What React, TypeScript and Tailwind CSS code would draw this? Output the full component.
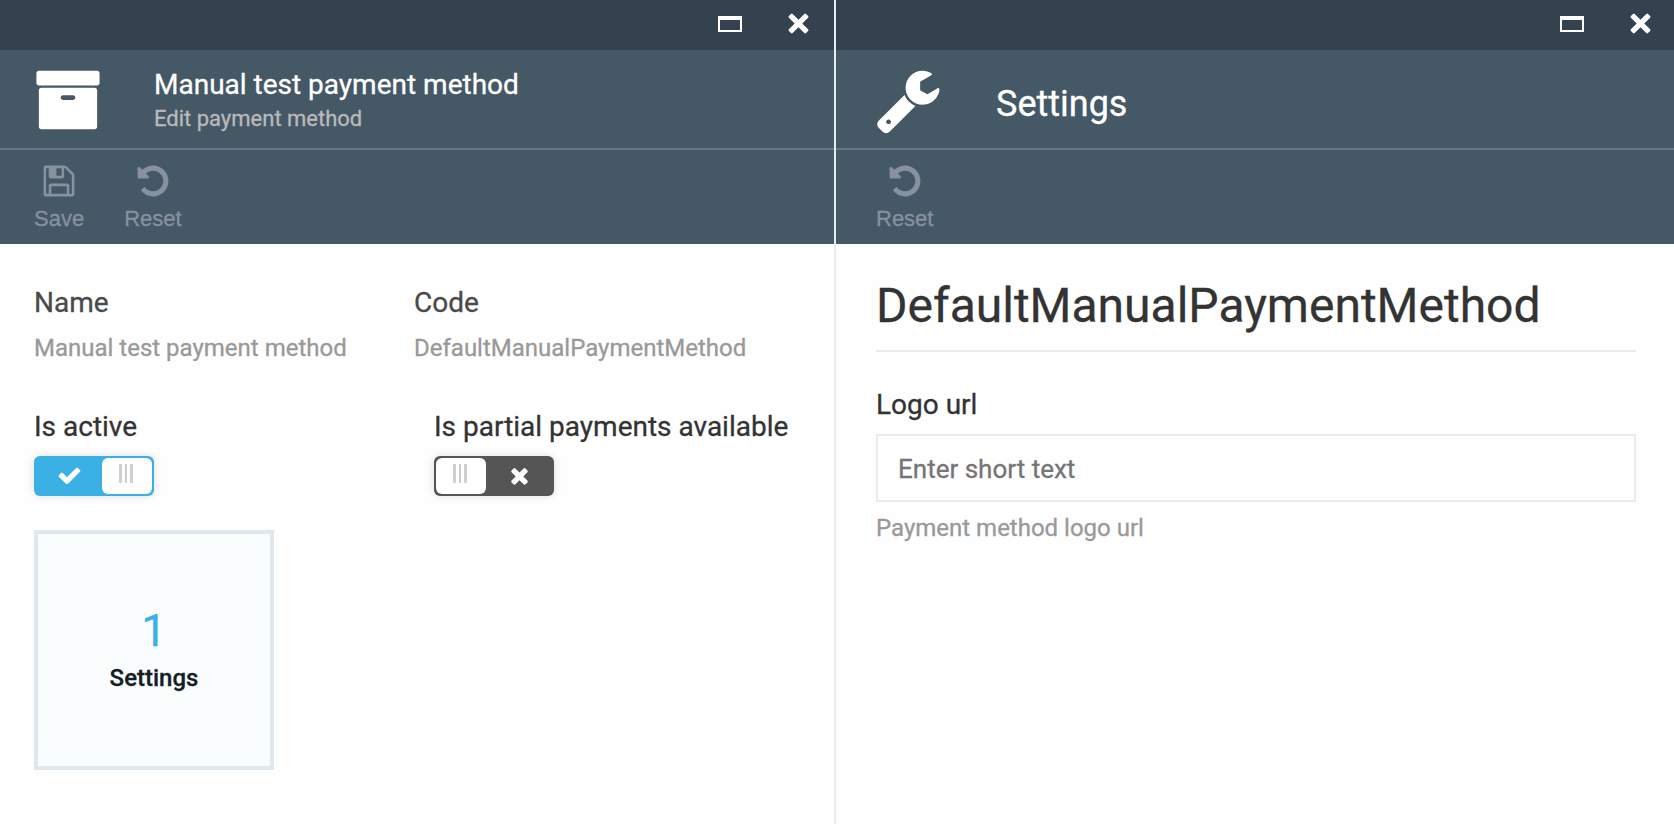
import React from 'react';

const ICONS = {
  archive:
    'M1088 832q0-26-19-45t-45-19h-256q-26 0-45 19t-19 45 19 45 45 19h256q26 0 45-19t19-45zm576-192v960q0 26-19 45t-45 19h-1408q-26 0-45-19t-19-45v-960q0-26 19-45t45-19h1408q26 0 45 19t19 45zm64-448v256q0 26-19 45t-45 19h-1536q-26 0-45-19t-19-45v-256q0-26 19-45t45-19h1536q26 0 45 19t19 45z',
  wrench:
    'M448 1472q0-26-19-45t-45-19-45 19-19 45 19 45 45 19 45-19 19-45zm644-420l-682 682q-37 37-90 37-52 0-91-37l-106-108q-38-36-38-90 0-53 38-91l681-681q39 98 114.5 173.5t173.5 114.5zm634-435q0 39-23 106-47 134-164.5 217.5t-258.5 83.5q-185 0-316.5-131.5t-131.5-316.5 131.5-316.5 316.5-131.5q58 0 121.5 16.5t107.5 46.5q16 11 16 28t-16 28l-293 169v224l193 107q5-3 79-48.5t135.5-81 70.5-35.5q15 0 23.5 10t8.5 25z',
  undo:
    'M1664 896q0 156-61 298t-164 245-245 164-298 61q-172 0-327-72.5t-264-204.5q-7-10-6.5-22.5t8.5-20.5l137-138q10-9 25-9 16 2 23 12 73 95 179 147t225 52q104 0 198.5-40.5t163.5-109.5 109.5-163.5 40.5-198.5-40.5-198.5-109.5-163.5-163.5-109.5-198.5-40.5q-98 0-188 35.5t-160 101.5l137 138q31 30 14 69-17 40-59 40h-448q-26 0-45-19t-19-45v-448q0-42 40-59 39-17 69 14l130 129q107-101 244.5-156.5t284.5-55.5q156 0 298 61t245 164 164 245 61 298z',
  save:
    'M512 1536h768v-384h-768v384zm896 0h128v-896q0-14-10-38.5t-20-34.5l-281-281q-10-10-34-20t-39-10v416q0 40-28 68t-68 28h-576q-40 0-68-28t-28-68v-416h-128v1280h128v-416q0-40 28-68t68-28h832q40 0 68 28t28 68v416zm-384-928v-320q0-13-9.5-22.5t-22.5-9.5h-192q-13 0-22.5 9.5t-9.5 22.5v320q0 13 9.5 22.5t22.5 9.5h192q13 0 22.5-9.5t9.5-22.5zm640 32v928q0 40-28 68t-68 28h-1344q-40 0-68-28t-28-68v-1344q0-40 28-68t68-28h928q40 0 88 20t76 48l280 280q28 28 48 76t20 88z',
  check:
    'M1671 566q0 40-28 68l-724 724-136 136q-28 28-68 28t-68-28l-136-136-362-362q-28-28-28-68t28-68l136-136q28-28 68-28t68 28l294 295 656-657q28-28 68-28t68 28l136 136q28 28 28 68z',
  times:
    'M1490 1322q0 40-28 68l-136 136q-28 28-68 28t-68-28l-294-294-294 294q-28 28-68 28t-68-28l-136-136q-28-28-28-68t28-68l294-294-294-294q-28-28-28-68t28-68l136-136q28-28 68-28t68 28l294 294 294-294q28-28 68-28t68 28l136 136q28 28 28 68t-28 68l-294 294 294 294q28 28 28 68z',
};

function Icon({ name, className }: { name: keyof typeof ICONS; className: string }) {
  return (
    <svg viewBox="0 0 1792 1792" fill="currentColor" className={`block shrink-0 ${className}`}>
      <path d={ICONS[name]} />
    </svg>
  );
}

function TitleBar({ className }: { className: string }) {
  return (
    <div className={`flex h-[50px] items-start justify-end bg-[#34414e] text-white ${className}`}>
      <div className="mt-4 h-4 w-6 border-2 border-t-4 border-white" />
      <svg viewBox="0 0 22 22" fill="currentColor" className="ml-[46px] mt-[13px] block size-[22px]">
        <rect x="-1.6" y="7.8" width="24.2" height="5.4" rx="1.2" transform="rotate(45 10.5 10.5)" />
        <rect x="-1.6" y="7.8" width="24.2" height="5.4" rx="1.2" transform="rotate(-45 10.5 10.5)" />
      </svg>
    </div>
  );
}

function Tool({ icon, label }: { icon: keyof typeof ICONS; label: string }) {
  return (
    <div className="flex flex-col items-center">
      <Icon name={icon} className="size-9" />
      <span className="mt-[7px] font-['Liberation_Sans',sans-serif] text-[22px] leading-[26px]">{label}</span>
    </div>
  );
}

function Grip() {
  return (
    <div className="flex h-9 w-[50px] justify-center gap-[3px] rounded-md bg-white pr-[2px] pt-[6px]">
      <span className="h-[19px] w-[3px] bg-[#d0d0d0]" />
      <span className="h-[19px] w-[2px] bg-[#cccccc]" />
      <span className="h-[19px] w-[3px] bg-[#d0d0d0]" />
    </div>
  );
}

function Toggle({ on }: { on: boolean }) {
  return on ? (
    <div className="flex h-10 w-[120px] items-center justify-between rounded-md bg-[#3ab0e4] p-0.5 text-white shadow-[0_0_8px_rgba(0,0,0,0.12)]">
      <span className="flex flex-1 justify-center pb-[2px]">
        <Icon name="check" className="size-[25px]" />
      </span>
      <Grip />
    </div>
  ) : (
    <div className="flex h-10 w-[120px] items-center justify-between rounded-md bg-[#555555] p-0.5 text-white shadow-[0_0_8px_rgba(0,0,0,0.12)]">
      <Grip />
      <span className="flex flex-1 justify-center pb-[2px]">
        <Icon name="times" className="size-[25px]" />
      </span>
    </div>
  );
}

export default function App() {
  return (
    <div className="flex h-[824px] w-[1674px] overflow-hidden bg-[#fefefe] font-['Roboto',sans-serif] text-[#333333] [-webkit-text-stroke:0.3px]">
      <section className="flex w-[836px] shrink-0 flex-col border-r-2 border-[#e8edf3]">
        <TitleBar className="pr-6" />
        <header className="flex h-[100px] border-b-2 border-[#687886] bg-[#455866] pl-[34px] text-white">
          <Icon name="archive" className="mt-4 size-[68px]" />
          <div className="ml-[52px] pt-[19px]">
            <h1 className="text-[28px] leading-8">Manual test payment method</h1>
            <p className="mt-[5px] text-[22px] leading-[26px] text-[#bababa]">Edit payment method</p>
          </div>
        </header>
        <nav className="flex h-[94px] gap-10 bg-[#455866] pl-[34px] pt-[13px] text-[#8791a0]">
          <Tool icon="save" label="Save" />
          <Tool icon="undo" label="Reset" />
        </nav>
        <main className="px-[34px] pt-[43px]">
          <div className="flex">
            <div className="w-[380px]">
              <div className="text-[28px] leading-8 text-[#4a4a4a]">Name</div>
              <div className="mt-[15px] text-2xl leading-7 text-[#999999]">Manual test payment method</div>
            </div>
            <div>
              <div className="text-[28px] leading-8 text-[#4a4a4a]">Code</div>
              <div className="mt-[15px] text-2xl leading-7 text-[#999999]">DefaultManualPaymentMethod</div>
            </div>
          </div>
          <div className="mt-[49px] flex">
            <div className="w-[400px]">
              <div className="mb-[13px] text-[28px] leading-8">Is active</div>
              <Toggle on />
            </div>
            <div>
              <div className="mb-[13px] whitespace-nowrap text-[28px] leading-8">Is partial payments available</div>
              <Toggle on={false} />
            </div>
          </div>
          <div className="mt-[34px] flex size-60 flex-col items-center border-4 border-[#dfe8ef] bg-[#fafdfe] pt-[70px]">
            <span className="text-[45px] leading-[54px] text-[#3ab0e4]">1</span>
            <span className="mt-[6px] text-2xl font-medium leading-7 text-[#161d25]">Settings</span>
          </div>
        </main>
      </section>

      <section className="flex min-w-0 flex-1 flex-col">
        <TitleBar className="pr-[22px]" />
        <header className="flex h-[100px] border-b-2 border-[#687886] bg-[#455866] pl-[38px] text-white">
          <Icon name="wrench" className="mt-4 size-[68px]" />
          <h1 className="ml-[54px] mt-[33px] text-[36px] leading-[42px]">Settings</h1>
        </header>
        <nav className="flex h-[94px] bg-[#455866] pl-10 pt-[13px] text-[#8791a0]">
          <Tool icon="undo" label="Reset" />
        </nav>
        <main className="pl-10 pr-[38px] pt-8">
          <h2 className="h-[76px] border-b-2 border-[#e9edf1] text-[48px] leading-[60px]">DefaultManualPaymentMethod</h2>
          <label className="mt-[37px] block text-[28px] leading-8">Logo url</label>
          <input
            className="mt-[13px] block h-[68px] w-full border-2 border-[#e9edf1] bg-[#fefefe] px-5 pt-[2px] text-[26px] placeholder:text-[#757575]"
            placeholder="Enter short text"
          />
          <p className="mt-3 text-2xl leading-7 text-[#999999]">Payment method logo url</p>
        </main>
      </section>
    </div>
  );
}
